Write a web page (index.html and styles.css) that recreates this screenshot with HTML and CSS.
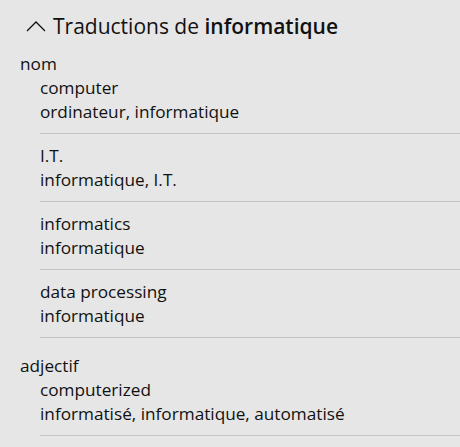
FILE: index.html
```html
<!DOCTYPE html>
<html lang="fr">
<head>
    <meta charset="UTF-8">
    <meta name="viewport" content="width=device-width, initial-scale=1.0">
    <title>Traductions de informatique</title>
    <link rel="stylesheet" href="styles.css">
</head>
<body>
    <div class="translations">
        <div class="translations-header">
            <svg class="chevron" width="20" height="12" viewBox="0 0 20 12">
                <path d="M1 11 L10 2 L19 11" fill="none" stroke="#111" stroke-width="1.3"/>
            </svg>
            <h2>Traductions de <b>informatique</b></h2>
        </div>

        <div class="pos-group">
            <div class="pos-label">nom</div>
            <ul class="sense-list">
                <li class="sense">
                    <div class="term">computer</div>
                    <div class="gloss">ordinateur, informatique</div>
                </li>
                <li class="sense">
                    <div class="term">I.T.</div>
                    <div class="gloss">informatique, I.T.</div>
                </li>
                <li class="sense">
                    <div class="term">informatics</div>
                    <div class="gloss">informatique</div>
                </li>
                <li class="sense">
                    <div class="term">data processing</div>
                    <div class="gloss">informatique</div>
                </li>
            </ul>
        </div>

        <div class="pos-group">
            <div class="pos-label">adjectif</div>
            <ul class="sense-list">
                <li class="sense">
                    <div class="term">computerized</div>
                    <div class="gloss">informatisé, informatique, automatisé</div>
                </li>
            </ul>
        </div>
    </div>
</body>
</html>
```

FILE: styles.css
```css
body {
    margin: 0;
    background-color: #e6e6e6;
    color: #111;
    font-family: "Open Sans", "Noto Sans", sans-serif;
    font-size: 17.2px;
    line-height: 24px;
}

.translations {
    padding-top: 10px;
}

.translations-header {
    display: flex;
    align-items: center;
    height: 32px;
    padding-left: 26px;
    margin-bottom: 10px;
}

.chevron {
    margin-right: 7px;
}

.translations-header h2 {
    margin: 0;
    font-size: 21px;
    font-weight: normal;
    line-height: 32px;
}

.translations-header b {
    font-weight: 600;
}

.pos-group {
    padding-left: 20px;
    margin-bottom: 16px;
}

.sense-list {
    list-style: none;
    margin: 0;
    padding: 0 0 0 20px;
}

.sense {
    padding: 10px 0 9px;
    border-bottom: 1px solid #c4c4c4;
}

.sense:first-child {
    padding-top: 0;
}
```
